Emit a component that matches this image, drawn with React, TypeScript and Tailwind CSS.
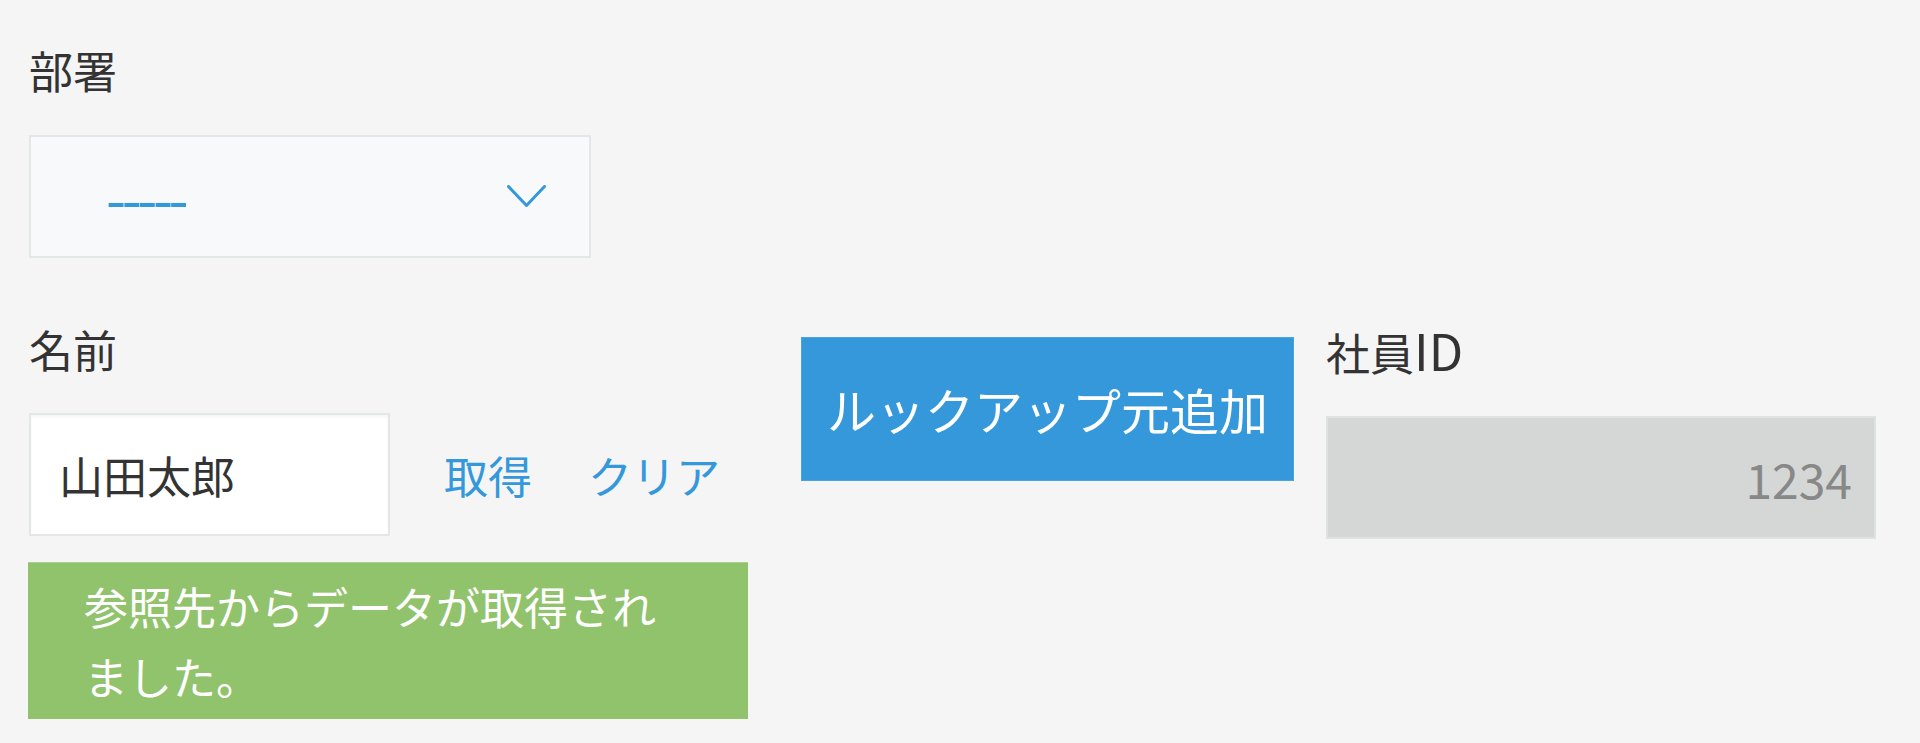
import React from "react";

const font = { fontFamily: '"Noto Sans CJK JP", "Noto Sans", sans-serif' };

export default function App() {
  return (
    <div
      className="w-full h-[743px] bg-[#f5f5f5] text-[#333333] pl-[29px] pt-[48px] overflow-hidden"
      style={font}
    >
      {/* 部署 */}
      <div className="text-[44px] leading-[44px]">部署</div>
      <div className="mt-[43px] w-[562px] h-[123px] border-2 border-[#e3e7e8] bg-[#f7f9fa] flex items-center justify-between pl-[75px] pr-[43px]">
        <span className="text-[58px] leading-[58px] text-[#3498db] tracking-[-4.5px] -mt-[2px]">-----</span>
        <svg width="39" height="23" viewBox="0 0 39 23" fill="none">
          <path d="M1.5 1.5 L19.5 20.5 L37.5 1.5" stroke="#3498db" strokeWidth="3" strokeLinecap="round" strokeLinejoin="round" />
        </svg>
      </div>

      {/* row 2 */}
      <div className="mt-[69px] flex items-start">
        {/* left column */}
        <div className="flex flex-col w-[720px]">
          <div className="text-[44px] leading-[44px]">名前</div>
          <div className="mt-[42px] flex items-center">
            <div className="w-[361px] h-[123px] border-2 border-[#e3e7e8] bg-white shadow-[inset_0_2px_3px_rgba(0,0,0,0.04)] flex items-center pl-[28px]">
              <span className="text-[44px] leading-[44px] text-[#333333]">山田太郎</span>
            </div>
            <span className="ml-[54px] text-[44px] leading-[44px] text-[#3498db]">取得</span>
            <span className="ml-[56px] text-[44px] leading-[44px] text-[#3498db]">クリア</span>
          </div>
          <div className="mt-[26px] -ml-[1px] w-[720px] h-[157px] bg-[#91c36c] border-t border-[#a9d08c] pt-[8px] pl-[56px] pr-[64px] text-white text-[44px] leading-[70px]">
            参照先からデータが取得されました。
          </div>
        </div>

        {/* button */}
        <div className="ml-[52px] mt-[10px] w-[493px] h-[144px] bg-[#3498db] border border-[#4aa3df] flex items-center justify-center text-white text-[49px] leading-[50px]">
          ルックアップ元追加
        </div>

        {/* 社員ID */}
        <div className="ml-[32px] flex flex-col">
          <div className="text-[44px] leading-[44px]">
            社員<span className="text-[50px]">ID</span>
          </div>
          <div className="mt-[42px] w-[550px] h-[123px] border-2 border-[#dfe2e2] bg-[#d5d7d6] flex items-center justify-end pr-[22px]">
            <span className="text-[48px] leading-[48px] text-[#888888]">1234</span>
          </div>
        </div>
      </div>
    </div>
  );
}
